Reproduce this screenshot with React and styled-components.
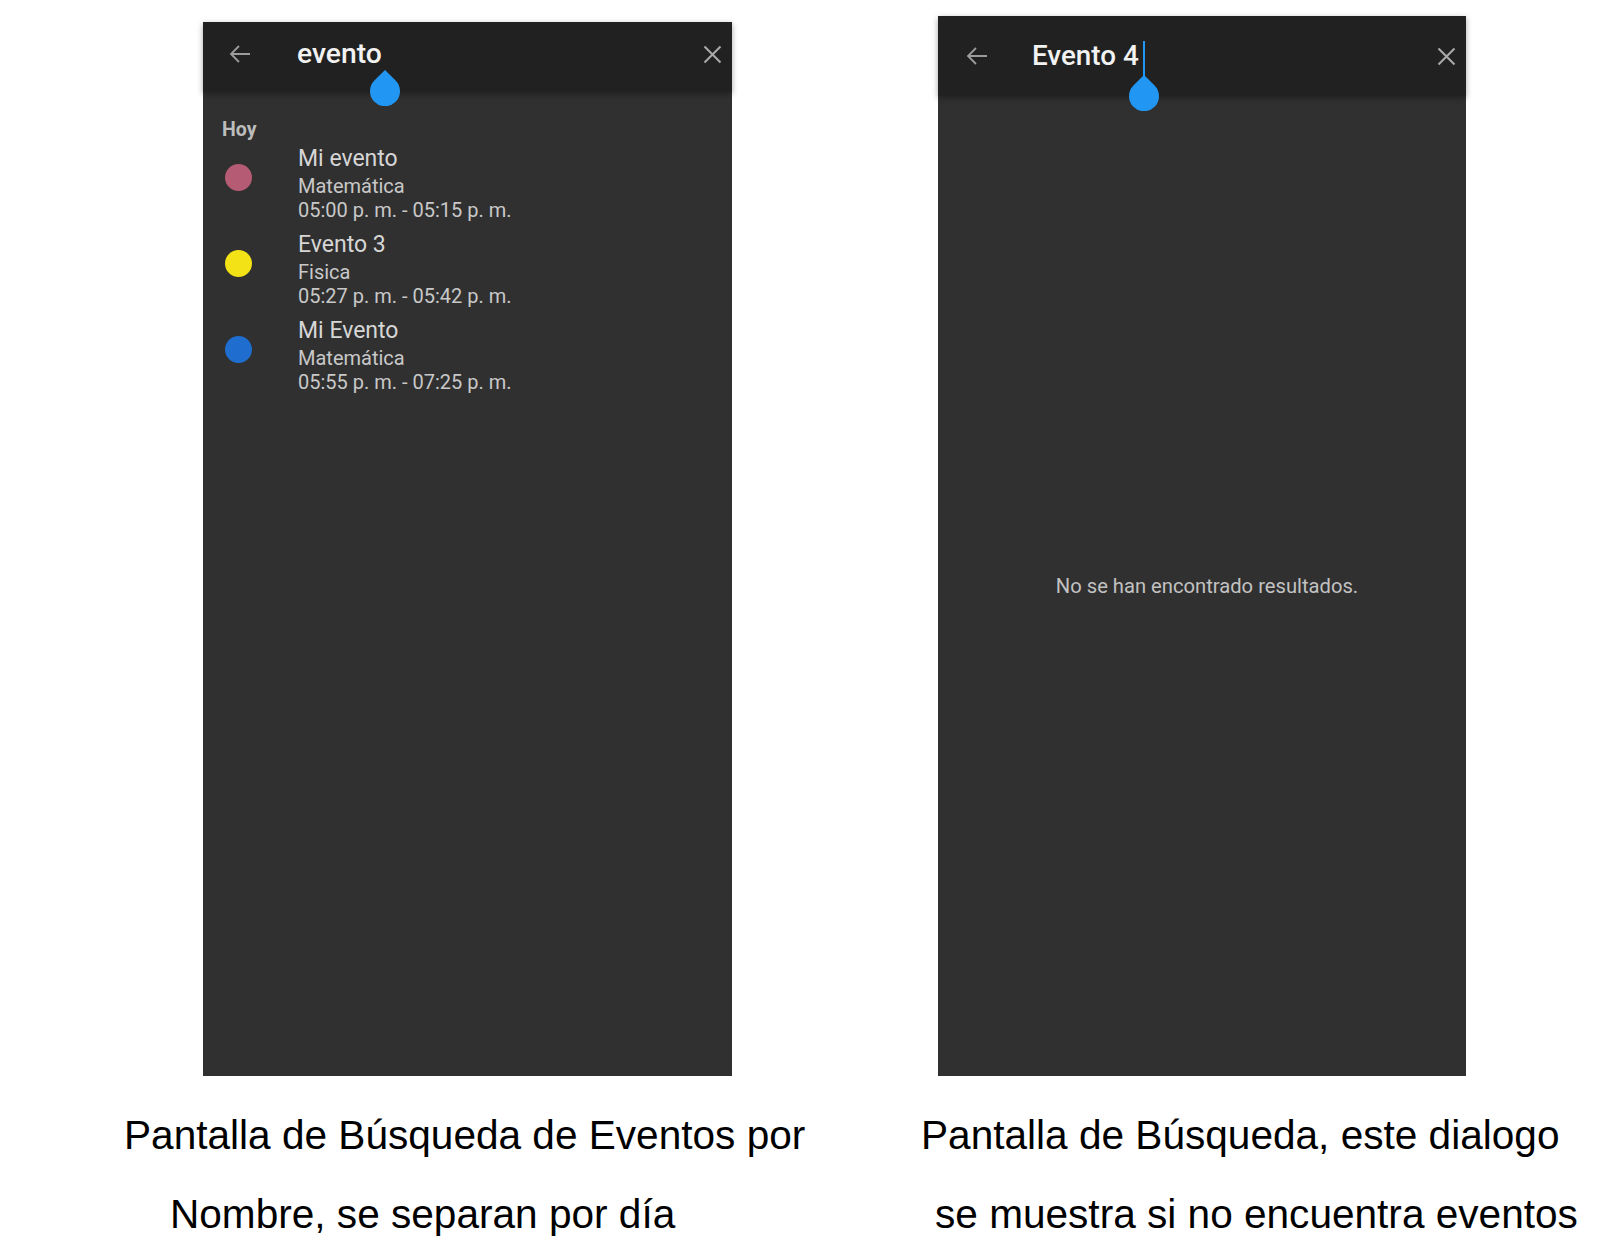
import React from 'react';
import styled, { createGlobalStyle } from 'styled-components';

const GlobalStyle = createGlobalStyle`
  html, body {
    margin: 0;
    padding: 0;
    background: #ffffff;
  }
  * {
    box-sizing: border-box;
  }
`;

const Page = styled.div`
  width: 1622px;
  height: 1260px;
  overflow: hidden;
  background: #ffffff;
  display: flex;
  flex-direction: column;
`;

const Screens = styled.div`
  display: flex;
  align-items: flex-end;
  height: 1076px;
  padding-left: 203px;
  gap: 206px;
`;

const Phone = styled.div`
  position: relative;
  width: ${(p) => p.$width}px;
  height: ${(p) => p.$height}px;
  background: #303030;
  display: flex;
  flex-direction: column;
  font-family: Roboto, 'Noto Sans', sans-serif;
`;

const Header = styled.div`
  position: relative;
  z-index: 1;
  height: ${(p) => p.$height}px;
  flex: none;
  background: #212121;
  box-shadow: 0 2px 6px rgba(0, 0, 0, 0.35);
  display: grid;
  grid-template-columns: ${(p) => p.$iconCol}px 1fr auto;
  align-items: center;
  padding: 0 10px ${(p) => p.$padBottom}px ${(p) => p.$padLeft}px;
`;

const IconButton = styled.span`
  display: flex;
  align-items: center;
  color: ${(p) => p.$color};
`;

const Query = styled.div`
  color: #f2f2f2;
  font-size: ${(p) => p.$size}px;
  font-weight: 500;
  line-height: 1;
  white-space: nowrap;
`;

const Handle = styled.div`
  position: absolute;
  z-index: 2;
  left: ${(p) => p.$left}px;
  top: ${(p) => p.$top}px;
  width: 30px;
  display: flex;
  flex-direction: column;
  align-items: center;
`;

const CaretLine = styled.div`
  width: 2px;
  height: ${(p) => p.$height}px;
  margin-bottom: -4px;
  background: #2196f3;
`;

const Body = styled.div`
  flex: 1;
  display: flex;
  flex-direction: column;
`;

const ResultList = styled.div`
  padding-top: 26px;
  display: flex;
  flex-direction: column;
  gap: 9px;
`;

const DayLabel = styled.div`
  padding-left: 19px;
  margin-bottom: -7px;
  height: 24px;
  line-height: 24px;
  font-size: 19.5px;
  font-weight: 700;
  color: #bdbdbd;
`;

const EventRow = styled.div`
  display: grid;
  grid-template-columns: 95px 1fr;
  align-items: start;
`;

const Dot = styled.span`
  width: 27px;
  height: 27px;
  margin: 20px 0 0 22px;
  border-radius: 50%;
  background: ${(p) => p.$color};
`;

const EventText = styled.div`
  display: flex;
  flex-direction: column;
  white-space: nowrap;
`;

const EventTitle = styled.div`
  height: 29px;
  line-height: 29px;
  font-size: 23px;
  color: #d6d6d6;
`;

const EventLine = styled.div`
  height: ${(p) => p.$height}px;
  line-height: ${(p) => p.$height}px;
  font-size: 20px;
  color: #c8c8c8;
`;

const Empty = styled.div`
  flex: 1;
  display: flex;
  align-items: center;
  justify-content: center;
  padding-left: 10px;
  font-size: 20.2px;
  color: #c2c2c2;
`;

const Captions = styled.div`
  display: flex;
  padding-top: 20px;
  font-family: 'Liberation Sans', Arial, sans-serif;
  color: #000000;
`;

const CaptionBlock = styled.div`
  width: ${(p) => p.$width}px;
  flex: none;
`;

const CaptionLine = styled.div`
  height: 79px;
  line-height: 79px;
  padding-left: ${(p) => p.$indent}px;
  font-size: 40.6px;
  white-space: nowrap;
`;

const BackArrow = () => (
  <svg width="22" height="20" viewBox="0 0 22 20" fill="none">
    <path d="M21 10H2M10 2L2 10l8 8" stroke="currentColor" strokeWidth="1.8" />
  </svg>
);

const CloseIcon = () => (
  <svg width="19" height="19" viewBox="0 0 19 19" fill="none">
    <path d="M1.5 1.5l16 16M17.5 1.5l-16 16" stroke="currentColor" strokeWidth="2.1" />
  </svg>
);

const Drop = () => (
  <svg width="30" height="36" viewBox="0 0 30 36">
    <path d="M15 0 L25.6 10.6 A15 15 0 1 1 4.4 10.6 Z" fill="#2196f3" />
  </svg>
);

const events = [
  { title: 'Mi evento', subject: 'Matemática', time: '05:00 p. m. - 05:15 p. m.', color: '#b65b74' },
  { title: 'Evento 3', subject: 'Fisica', time: '05:27 p. m. - 05:42 p. m.', color: '#f3e215' },
  { title: 'Mi Evento', subject: 'Matemática', time: '05:55 p. m. - 07:25 p. m.', color: '#1f6dcf' },
];

const SearchHeader = ({ height, padLeft, padBottom, iconCol, query, size }) => (
  <Header $height={height} $padLeft={padLeft} $padBottom={padBottom} $iconCol={iconCol}>
    <IconButton $color="#9c9c9c">
      <BackArrow />
    </IconButton>
    <Query $size={size}>{query}</Query>
    <IconButton $color="#a9a9a9">
      <CloseIcon />
    </IconButton>
  </Header>
);

export default function App() {
  return (
    <Page>
      <GlobalStyle />
      <Screens>
        <Phone $width={529} $height={1054}>
          <SearchHeader height={70} padLeft={26} padBottom={6} iconCol={68} query="evento" size={28.3} />
          <Handle $left={167} $top={48}>
            <Drop />
          </Handle>
          <Body>
            <ResultList>
              <DayLabel>Hoy</DayLabel>
              {events.map((ev) => (
                <EventRow key={ev.time}>
                  <Dot $color={ev.color} />
                  <EventText>
                    <EventTitle>{ev.title}</EventTitle>
                    <EventLine $height={26}>{ev.subject}</EventLine>
                    <EventLine $height={22}>{ev.time}</EventLine>
                  </EventText>
                </EventRow>
              ))}
            </ResultList>
          </Body>
        </Phone>

        <Phone $width={528} $height={1060}>
          <SearchHeader height={80} padLeft={28} padBottom={0} iconCol={66} query="Evento 4" size={27.8} />
          <Handle $left={191} $top={25}>
            <CaretLine $height={38} />
            <Drop />
          </Handle>
          <Body>
            <Empty>No se han encontrado resultados.</Empty>
          </Body>
        </Phone>
      </Screens>

      <Captions>
        <CaptionBlock $width={800}>
          <CaptionLine $indent={124}>Pantalla de Búsqueda de Eventos por</CaptionLine>
          <CaptionLine $indent={170}>Nombre, se separan por día</CaptionLine>
        </CaptionBlock>
        <CaptionBlock $width={822}>
          <CaptionLine $indent={121}>Pantalla de Búsqueda, este dialogo</CaptionLine>
          <CaptionLine $indent={135}>se muestra si no encuentra eventos</CaptionLine>
        </CaptionBlock>
      </Captions>
    </Page>
  );
}
